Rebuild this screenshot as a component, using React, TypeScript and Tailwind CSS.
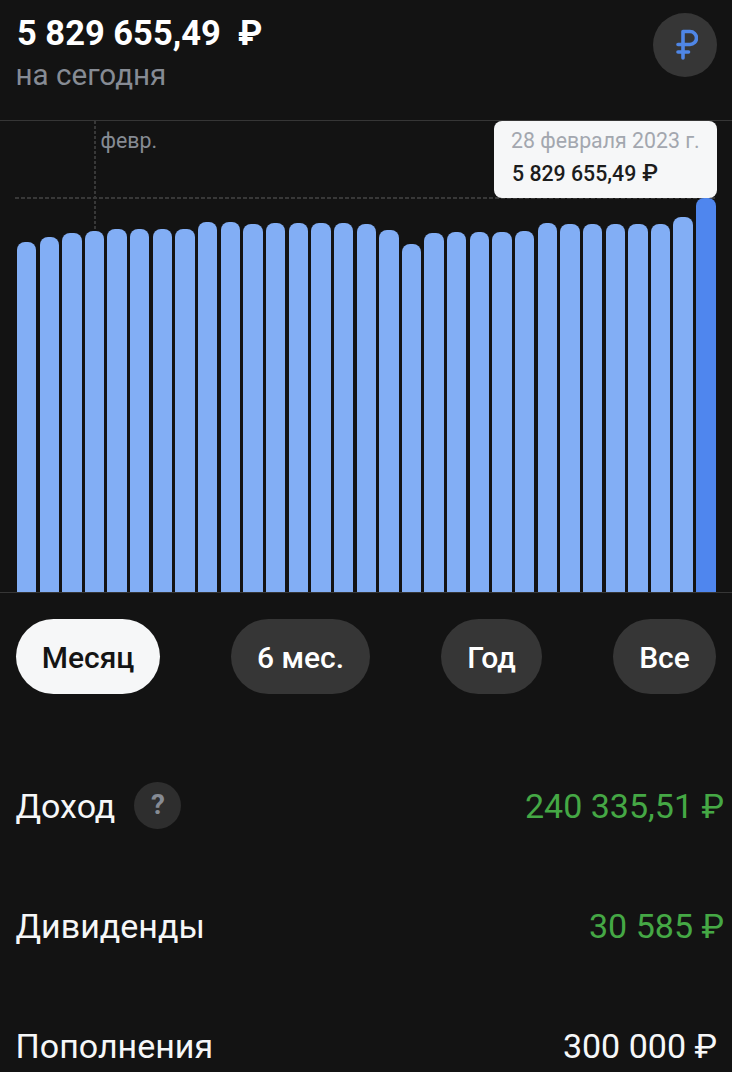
const tops = [242,237,233,231,229,229,229,229,222,222,224,223,223,223,223,224,230,244,233,232,232,232,231,223,224,224,224,224,224,217,198];

function Pill({ label, active, w }: { label: string; active?: boolean; w: string }) {
  return (
    <div className={`${w} h-[75px] rounded-[38px] flex items-center justify-center text-[30px] font-medium pt-[1px] ${active ? "bg-[#f6f7f8] text-[#141414]" : "bg-[#363636] text-white"}`}>
      {label}
    </div>
  );
}

function Row({ label, value, color, extra, valueClass }: { label: string; value: string; color: string; extra?: boolean; valueClass?: string }) {
  return (
    <div className="h-[120px] flex items-center justify-between">
      <div className="flex items-center gap-[19px]">
        <span className="text-[34px] text-[#f6f7f8]">{label}</span>
        {extra && (
          <span className="w-[47px] h-[47px] mb-[2px] rounded-full bg-[#2e2e2e] flex items-center justify-center text-[28px] font-bold text-[#868b94]">?</span>
        )}
      </div>
      <span className={`text-[34px] ${color} ${valueClass ?? ""}`}>{value}</span>
    </div>
  );
}

export default function App() {
  return (
    <div className="w-[732px] h-[1072px] overflow-hidden bg-[#131313] font-['Roboto',sans-serif]">
      <div className="h-[120px] pl-4 pr-[15px] flex justify-between">
        <div>
          <div className="text-[34.5px] font-bold text-white leading-[38px] mt-[14px] pl-[1px] whitespace-pre">5 829 655,49  ₽</div>
          <div className="text-[29.6px] text-[#868b94] leading-[34px] mt-[6px] -ml-[0.5px]">на сегодня</div>
        </div>
        <div className="w-16 h-16 rounded-full bg-[#363636] mt-[13px] flex items-center justify-center">
          <svg width="26" height="32" viewBox="-1 0 26 32" fill="none" stroke="#4f86e6" strokeWidth="3.6" strokeLinecap="round" strokeLinejoin="round">
            <path d="M10 29V2.500h7a6.500 6.500 0 0 1 0 13H5" />
            <path d="M5 23H15.500" />
          </svg>
        </div>
      </div>

      <div className="relative h-[473px] border-y border-[#363636]">
        <div className="absolute left-[94px] top-0 w-[2px] h-[108px] bg-[repeating-linear-gradient(to_bottom,#383838_0,#383838_3px,transparent_3px,transparent_5px)]" />
        <div className="absolute left-[15px] right-[15px] top-[76px] h-[2px] bg-[repeating-linear-gradient(to_right,#383838_0,#383838_4px,transparent_4px,transparent_6px)]" />
        <div className="absolute left-[100.5px] top-[6px] text-[21.300px] leading-[28px] text-[#868b94]">февр.</div>
        <div className="absolute inset-x-0 bottom-0 pl-[16.9px] flex items-end gap-[3.25px]">
          {tops.map((t, i) => (
            <div
              key={i}
              className={`w-[19.4px] rounded-t-[8px] ${i === 30 ? "bg-[#4f86ee]" : "bg-[#82aef5]"}`}
              style={{ height: 592 - t }}
            />
          ))}
        </div>
        <div className="absolute left-[494px] top-0 w-[223px] h-[77px] rounded-[8px] bg-[#f6f7f8] pl-[17px]">
          <div className="text-[21.300px] leading-[26px] mt-[7px] text-[#a3a7af] whitespace-pre">28 февраля 2023 г.</div>
          <div className="text-[21.300px] leading-[26px] mt-[7px] pl-[1px] font-medium text-[#1c1c1c] whitespace-pre">
            5 829 655,49
            <span className="ml-[6px] text-[23px]">₽</span>
          </div>
        </div>
      </div>

      <div className="px-4 mt-[26px] flex justify-between">
        <Pill label="Месяц" active w="w-[144px]" />
        <Pill label="6 мес." w="w-[139px]" />
        <Pill label="Год" w="w-[101px]" />
        <Pill label="Все" w="w-[103px]" />
      </div>

      <div className="pl-[15.5px] pr-2 mt-[52px]">
        <Row label="Доход" value="240 335,51 ₽" color="text-[#45a845]" extra />
        <Row label="Дивиденды" value="30 585 ₽" color="text-[#45a845]" />
        <Row label="Пополнения" value="300 000 ₽" color="text-[#f6f7f8]" valueClass="mr-[7px]" />
      </div>
    </div>
  );
}
